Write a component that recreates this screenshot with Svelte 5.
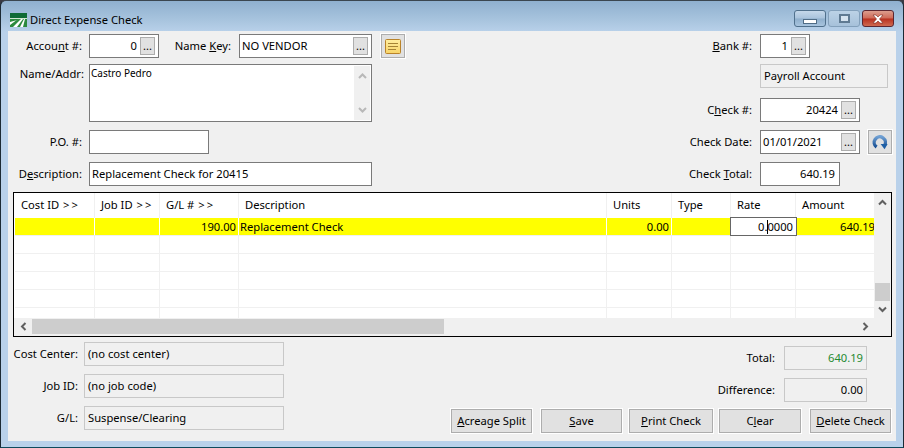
<script>
  const cols = [
    { cls: 'c1', head: 'Cost ID', more: true },
    { cls: 'c2', head: 'Job ID', more: true },
    { cls: 'c3', head: 'G/L #', more: true },
    { cls: 'c4', head: 'Description' },
    { cls: 'c5', head: 'Units' },
    { cls: 'c6', head: 'Type' },
    { cls: 'c7', head: 'Rate' },
    { cls: 'c8', head: 'Amount' }
  ];
  const emptyRows = [1, 2, 3, 4];
</script>

<div class="window">
  <header class="titlebar">
    <svg class="logo" width="17" height="14" viewBox="0 0 17 14">
      <rect x="0" y="0" width="17" height="14" fill="#2c8a3e" />
      <rect x="0" y="0" width="17" height="5" fill="#0f6b35" />
      <rect x="0" y="5" width="17" height="1" fill="#cfe6cf" />
      <path d="M0 9 L11 6 L6 7.5 L0 12Z M3 14 L7 14 L13 6 L11 6Z M10 14 L13 14 L15 6 L14 6Z" fill="#fff" />
    </svg>
    <span class="title">Direct Expense Check</span>
    <div class="caption">
      <button class="cap min" aria-label="Minimize"><i class="minbar"></i></button>
      <button class="cap max" aria-label="Maximize"><i class="maxbox"></i></button>
      <button class="cap close" aria-label="Close">
        <svg width="14" height="10" viewBox="0 0 14 10"><path d="M2 1 H5 L7 3 L9 1 H12 L8.5 5 L12 9 H9 L7 7 L5 9 H2 L5.5 5Z" fill="#fff" stroke="#7a2a20" stroke-width=".6" /></svg>
      </button>
    </div>
  </header>

  <main class="client">
    <section class="top">
      <div class="leftcol">
        <div class="row">
          <span class="lbl">Accou<u>n</u>t #:</span>
          <div class="field w70 right">0<span class="dots">...</span></div>
          <span class="lbl namekey">Name <u>K</u>ey:</span>
          <div class="field w133">NO VENDOR<span class="spacer"></span><span class="dots">...</span></div>
          <button class="iconbtn note" aria-label="Note">
            <svg width="16" height="15" viewBox="0 0 16 15">
              <defs>
                <linearGradient id="noteFill" x1="0" y1="0" x2="0" y2="1">
                  <stop offset="0" stop-color="#ffeea0" />
                  <stop offset="1" stop-color="#f8d468" />
                </linearGradient>
              </defs>
              <rect x=".5" y=".5" width="15" height="14" rx="1" fill="url(#noteFill)" stroke="#b9832a" />
              <path d="M3 4.5H13M3 7.5H13M3 10.5H11" stroke="#a58436" stroke-width="1" />
            </svg>
          </button>
        </div>
        <div class="row">
          <span class="lbl wide">Name/Addr:</span>
          <div class="memo">
            <span class="memotext">Castro Pedro</span>
            <div class="memoscroll">
              <svg width="9" height="6" viewBox="0 0 9 6"><path d="M1 5 L4.5 1.5 L8 5" fill="none" stroke="#b8b8b8" stroke-width="2" /></svg>
              <svg width="9" height="6" viewBox="0 0 9 6"><path d="M1 1 L4.5 4.5 L8 1" fill="none" stroke="#b8b8b8" stroke-width="2" /></svg>
            </div>
          </div>
        </div>
        <div class="row">
          <span class="lbl">P.O. #:</span>
          <div class="field w120"></div>
        </div>
        <div class="row">
          <span class="lbl">D<u>e</u>scription:</span>
          <div class="field w283">Replacement Check for 20415</div>
        </div>
      </div>

      <div class="rightcol">
        <div class="row">
          <span class="rlbl"><u>B</u>ank #:</span>
          <div class="field w50 right">1<span class="dots">...</span></div>
        </div>
        <div class="row">
          <span class="rlbl"></span>
          <div class="ro w128">Payroll Account</div>
        </div>
        <div class="row">
          <span class="rlbl">C<u>h</u>eck #:</span>
          <div class="field w100 right">20424<span class="dots">...</span></div>
        </div>
        <div class="row">
          <span class="rlbl">Check Date:</span>
          <div class="field w100">01/01/2021<span class="spacer"></span><span class="dots">...</span></div>
          <button class="iconbtn refresh" aria-label="Refresh">
            <svg width="16" height="16" viewBox="0 0 16 16">
              <defs>
                <linearGradient id="ringFill" x1="0" y1="0" x2="0" y2="1">
                  <stop offset="0" stop-color="#6f9fd2" />
                  <stop offset="1" stop-color="#174f94" />
                </linearGradient>
              </defs>
              <path d="M4.6 13 A5.6 5.6 0 1 1 12.4 11.6" fill="none" stroke="url(#ringFill)" stroke-width="3.4" />
              <path d="M8.6 10 L15.6 10 L12.6 15.2Z" fill="#1f5fa5" />
            </svg>
          </button>
        </div>
        <div class="row">
          <span class="rlbl">Check <u>T</u>otal:</span>
          <div class="field w80 right pad">640.19</div>
        </div>
      </div>
    </section>

    <section class="grid">
      <div class="gridmain">
        <div class="sheet">
          <div class="gr head">
            {#each cols as c}
              <div class="cell {c.cls}">{c.head}{#if c.more}<span class="gt">&gt;&gt;</span>{/if}</div>
            {/each}
          </div>
          <div class="gr sel">
            <div class="cell c1"></div>
            <div class="cell c2"></div>
            <div class="cell c3 num">190.00</div>
            <div class="cell c4 txt">Replacement Check</div>
            <div class="cell c5 num">0.00</div>
            <div class="cell c6"></div>
            <div class="cell c7 num editor">0.<span class="caret"></span>0000</div>
            <div class="cell c8 num">640.19</div>
          </div>
          {#each emptyRows as r (r)}
            <div class="gr blank">
              {#each cols as c}
                <div class="cell {c.cls}"></div>
              {/each}
            </div>
          {/each}
          <div class="gr tail">
            {#each cols as c}
              <div class="cell {c.cls}"></div>
            {/each}
          </div>
        </div>
        <div class="hscroll">
          <svg class="harrow" width="7" height="9" viewBox="0 0 7 9"><path d="M5.5 1 L2 4.5 L5.5 8" fill="none" stroke="#606060" stroke-width="2" /></svg>
          <div class="hthumb"></div>
          <svg class="harrow rightarrow" width="7" height="9" viewBox="0 0 7 9"><path d="M1.5 1 L5 4.5 L1.5 8" fill="none" stroke="#606060" stroke-width="2" /></svg>
        </div>
      </div>
      <div class="vscroll">
        <svg width="9" height="7" viewBox="0 0 9 7"><path d="M1 5.5 L4.5 2 L8 5.5" fill="none" stroke="#606060" stroke-width="2" /></svg>
        <div class="vthumb"></div>
        <svg width="9" height="7" viewBox="0 0 9 7"><path d="M1 1.5 L4.5 5 L8 1.5" fill="none" stroke="#606060" stroke-width="2" /></svg>
      </div>
    </section>

    <section class="bottom">
      <div class="info">
        <div class="row"><span class="blbl">Cost Center:</span><div class="ro w200">(no cost center)</div></div>
        <div class="row"><span class="blbl">Job ID:</span><div class="ro w200">(no job code)</div></div>
        <div class="row"><span class="blbl">G/L:</span><div class="ro w200">Suspense/Clearing</div></div>
      </div>
      <div class="summary">
        <div class="totals">
          <div class="row"><span class="tlbl">Total:</span><div class="ro w83 right green">640.19</div></div>
          <div class="row"><span class="tlbl">Difference:</span><div class="ro w83 right">0.00</div></div>
        </div>
        <div class="actions">
          <button class="btn b1"><u>A</u>creage Split</button>
          <button class="btn b2"><u>S</u>ave</button>
          <button class="btn b3"><u>P</u>rint Check</button>
          <button class="btn b4">C<u>l</u>ear</button>
          <button class="btn b5"><u>D</u>elete Check</button>
        </div>
      </div>
    </section>
  </main>
</div>

<style>
  :global(body) {
    margin: 0;
    background: #3a3a44;
  }
  .window {
    box-sizing: border-box;
    width: 904px;
    height: 448px;
    margin: 0;
    border: 1px solid #1c2a34;
    border-top-color: #3a4650;
    border-radius: 6px 6px 0 0;
    border-bottom-color: #0f4a5c;
    background: linear-gradient(#8fb0cf 0, #a9c5df 20px, #b9d1ea 31px);
    padding: 0 7px 6px 7px;
    font-family: "Noto Sans", Tahoma, sans-serif;
    font-size: 11.2px;
    color: #000;
    overflow: hidden;
    display: flex;
    flex-direction: column;
  }
  .titlebar {
    height: 30px;
    flex: none;
    display: flex;
    align-items: center;
    padding: 8px 0 0 2px;
    box-sizing: border-box;
  }
  .logo { margin-right: 3px; }
  .title { font-size: 11.2px; margin-bottom: 2px; }
  .caption {
    margin-left: auto;
    margin-right: 2px;
    margin-top: -3px;
    display: flex;
    gap: 2px;
  }
  .cap {
    width: 32px;
    height: 17px;
    padding: 0;
    border: 1px solid #50708c;
    border-radius: 3px;
    background: linear-gradient(#c5d8ea 0, #a9c3dc 48%, #8fafcc 52%, #a8c4de 100%);
    display: flex;
    align-items: center;
    justify-content: center;
  }
  .max { border-color: #83a0bb; background: linear-gradient(#bcd2e6, #a6c1da); }
  .close {
    border-color: #5c2630;
    background: linear-gradient(#dc9d8e 0, #cf6a58 48%, #b8301f 52%, #cf6a50 100%);
  }
  .minbar {
    display: block;
    width: 12px;
    height: 3px;
    margin-top: 5px;
    background: #fff;
    border: 1px solid #4f6c86;
  }
  .maxbox {
    display: block;
    box-sizing: border-box;
    width: 11px;
    height: 9px;
    border: 2px solid #5f7a92;
    background: #d6e3ef;
  }
  .client {
    flex: 1;
    background: #f0f0f0;
    padding: 3px 0 0 0;
    min-height: 0;
  }
  .top {
    display: flex;
    justify-content: space-between;
  }
  .row {
    display: flex;
    align-items: center;
  }
  .leftcol { display: flex; flex-direction: column; gap: 6px; }
  .leftcol .row:nth-child(2) { align-items: flex-start; }
  .leftcol .row:nth-child(3) { margin-top: 2px; }
  .leftcol .row:nth-child(4) { margin-top: 2px; }
  .lbl {
    width: 74px;
    margin-right: 7px;
    padding-bottom: 2px;
    text-align: right;
    white-space: nowrap;
  }
  .lbl.wide { margin-top: 2px; width: 76px; margin-right: 5px; }
  .lbl.namekey { width: 64px; margin-left: 8px; margin-right: 8px; }
  .rightcol {
    display: flex;
    flex-direction: column;
    gap: 6px;
    margin-right: 4px;
    width: 140px;
    align-items: flex-start;
    margin-left: -8px;
  }
  .rightcol .row { gap: 0; position: relative; }
  .rightcol .row:nth-child(2) { margin-bottom: 4px; }
  .rightcol .row:nth-child(3) { margin-bottom: 2px; }
  .rightcol .row:nth-child(4) { margin-bottom: 2px; }
  .rlbl {
    width: 100px;
    margin-left: -100px;
    margin-right: 8px;
    padding-bottom: 2px;
    text-align: right;
    white-space: nowrap;
  }
  .field {
    box-sizing: border-box;
    height: 24px;
    background: #fff;
    border: 1px solid #7a7a7a;
    display: flex;
    align-items: center;
    padding: 0 3px 2px 2px;
    white-space: nowrap;
  }
  .right { justify-content: flex-end; }
  .pad { padding-right: 4px; }
  .spacer { flex: 1; }
  .dots {
    box-sizing: border-box;
    width: 15px;
    height: 18px;
    margin: 2px 0 0 3px;
    background: #e1e1e1;
    border: 1px solid #adadad;
    font-size: 11px;
    line-height: 15px;
    text-align: center;
  }
  .w50 { width: 50px; }
  .w70 { width: 70px; }
  .w80 { width: 80px; }
  .w83 { width: 83px; }
  .w100 { width: 100px; }
  .w120 { width: 120px; }
  .w128 { width: 128px; }
  .w133 { width: 133px; }
  .w200 { width: 200px; }
  .w283 { width: 283px; }
  .memo {
    box-sizing: border-box;
    width: 283px;
    height: 58px;
    background: #fff;
    border: 1px solid #7a7a7a;
    display: flex;
    justify-content: space-between;
  }
  .memotext { padding: 1px 0 0 1px; font-size: 10px; }
  .memoscroll {
    width: 16px;
    margin: 1px 1px 1px 0;
    background: #f0f0f0;
    display: flex;
    flex-direction: column;
    justify-content: space-between;
    align-items: center;
    padding: 7px 0;
    box-sizing: border-box;
  }
  .iconbtn {
    box-sizing: border-box;
    width: 24px;
    height: 24px;
    margin-left: 8px;
    padding: 0;
    background: #e1e1e1;
    border: 1px solid #adadad;
    outline: 1px solid #fff;
    outline-offset: -0px;
    display: flex;
    align-items: center;
    justify-content: center;
  }
  .note { margin-left: 9px; }
  .ro {
    box-sizing: border-box;
    height: 24px;
    background: #f0f0f0;
    border: 1px solid #c8c8c8;
    display: flex;
    align-items: center;
    padding: 0 3px 2px;
    white-space: nowrap;
  }
  .green { color: #1f8a30; }
  .grid {
    box-sizing: border-box;
    width: 879px;
    height: 145px;
    margin: 6px 0 0 5px;
    border: 1px solid #000;
    background: #f0f0f0;
    display: flex;
  }
  .gridmain {
    width: 860px;
    display: flex;
    flex-direction: column;
  }
  .sheet {
    height: 125px;
    background: #fff;
    overflow: hidden;
    padding-left: 1px;
  }
  .gr { display: flex; }
  .cell {
    box-sizing: border-box;
    flex: none;
    height: 100%;
    border-right: 1px solid #f0f0f0;
    white-space: nowrap;
    display: flex;
    align-items: center;
  }
  .c1 { width: 80px; }
  .c2 { width: 65px; }
  .c3 { width: 79px; }
  .c4 { width: 368px; }
  .c5 { width: 65px; }
  .c6 { width: 59px; }
  .c7 { width: 65px; }
  .c8 { width: 81px; border-right: 0; }
  .head { height: 25px; }
  .head .cell { padding: 0 0 2px 6px; }
  .gt { margin-left: 4px; letter-spacing: 2px; }
  .sel { height: 18px; background: #ff0; border-bottom: 1px solid #f0f0f0; box-sizing: border-box; }
  .sel .cell { border-right-color: #fff; }
  .num { justify-content: flex-end; padding-right: 2px; }
  .txt { padding-left: 1px; }
  .editor {
    position: relative;
    background: #fff;
    border: 1px solid #666;
    margin: -1px -1px -1px -1px;
    height: 19px;
    width: 67px;
    padding-right: 3px;
    z-index: 1;
  }
  .sel .cell.editor { border-color: #666; }
  .caret {
    display: inline-block;
    height: 14px;
    border-left: 1px solid #000;
    margin-right: -1px;
  }
  .blank { height: 18px; border-bottom: 1px solid #f0f0f0; box-sizing: border-box; }
  .tail { height: 10px; }
  .hscroll {
    height: 15px;
    margin-top: 1px;
    background: #f0f0f0;
    display: flex;
    align-items: center;
    position: relative;
  }
  .harrow { margin-left: 6px; flex: none; }
  .hthumb {
    width: 412px;
    height: 15px;
    margin-left: 5px;
    background: #cdcdcd;
  }
  .rightarrow { margin-left: auto; margin-right: 5px; }
  .vscroll {
    width: 16px;
    height: 125px;
    background: #f0f0f0;
    display: flex;
    flex-direction: column;
    align-items: center;
    padding-top: 6px;
    box-sizing: border-box;
  }
  .vthumb {
    width: 15px;
    height: 18px;
    margin-top: 77px;
    margin-bottom: 5px;
    background: #cdcdcd;
  }
  .bottom {
    display: flex;
    margin-top: 5px;
  }
  .info { display: flex; flex-direction: column; gap: 8px; }
  .blbl {
    width: 70px;
    margin-right: 6px;
    padding-bottom: 2px;
    text-align: right;
    white-space: nowrap;
  }
  .summary {
    margin-left: 167px;
    width: 441px;
    display: flex;
    flex-direction: column;
  }
  .totals {
    display: flex;
    flex-direction: column;
    gap: 8px;
    align-items: flex-end;
    margin-top: 4px;
    margin-right: 25px;
  }
  .tlbl { margin-right: 9px; padding-bottom: 2px; }
  .actions {
    display: flex;
    margin-top: 7px;
  }
  .btn {
    box-sizing: border-box;
    height: 24px;
    padding: 0 0 2px;
    background: #e1e1e1;
    border: 1px solid #adadad;
    font: inherit;
    color: #000;
    outline: 1px solid #fff;
    white-space: nowrap;
  }
  .b1 { width: 81px; }
  .b2 { width: 81px; margin-left: 9px; }
  .b3 { width: 84px; margin-left: 7px; }
  .b4 { width: 82px; margin-left: 6px; }
  .b5 { width: 81px; margin-left: 9px; }
</style>
